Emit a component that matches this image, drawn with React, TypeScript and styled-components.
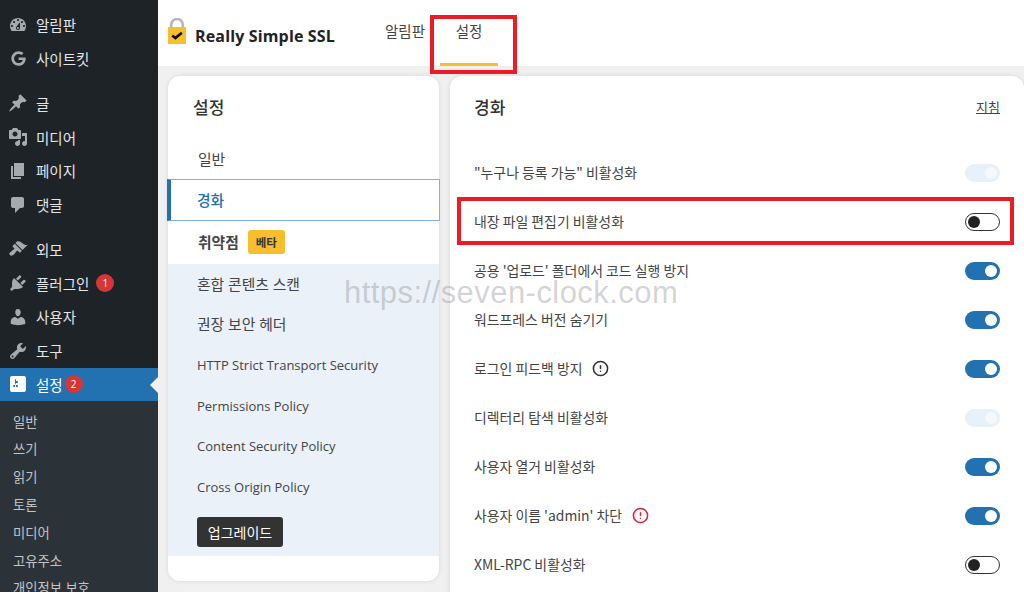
import React from "react"
import styled, { createGlobalStyle } from "styled-components"
import { FaGoogle } from "react-icons/fa"
import { CircleAlert } from "lucide-react"

const GlobalStyle = createGlobalStyle`
	html, body {
		margin: 0;
		height: 100%;
		overflow: hidden;
	}
	body {
		font-family: "Open Sans", "Noto Sans CJK KR", sans-serif;
		background: #f0f0f0;
	}
`

const AppWrap = styled.div`
	position: relative;
	display: flex;
	width: 1024px;
	height: 592px;
	overflow: hidden;
`

const Sidebar = styled.nav`
	flex: 0 0 158px;
	display: flex;
	flex-direction: column;
	background: #1d2327;
	padding-top: 8px;
	box-sizing: border-box;
	overflow: hidden;
`

const MenuGroup = styled.div`
	flex-shrink: 0;
	margin-bottom: 10.8px;
`

const MenuItem = styled.div<{ $active?: boolean }>`
	position: relative;
	flex-shrink: 0;
	display: flex;
	align-items: center;
	height: 33.8px;
	padding-left: 8px;
	gap: 8px;
	font-size: 14.5px;
	color: ${p => (p.$active ? "#fff" : "#e4e6e8")};
	background: ${p => (p.$active ? "#2271b1" : "transparent")};
	svg.menu-icon {
		flex: 0 0 20px;
		width: 20px;
		height: 20px;
		fill: ${p => (p.$active ? "#fff" : "#a7aaad")};
	}
`

const GoogleSlot = styled.span`
	flex: 0 0 20px;
	display: flex;
	justify-content: center;
	color: #a7aaad;
	font-size: 15px;
`

const Count = styled.span<{ $tight?: boolean }>`
	display: inline-flex;
	align-items: center;
	justify-content: center;
	width: 18px;
	height: 18px;
	border-radius: 50%;
	background: #d63638;
	color: #fff;
	font-size: 10px;
	margin-left: ${p => (p.$tight ? "-6px" : "-1px")};
`

const ActiveArrow = styled.span`
	position: absolute;
	right: 0;
	top: 9px;
	border: 8px solid transparent;
	border-left-width: 0;
	border-right-color: #f0f0f1;
`

const SubMenu = styled.div`
	flex: 1 0 auto;
	background: #2c3338;
	padding: 7.2px 0 0 13px;
`

const SubItem = styled.div`
	height: 27.8px;
	line-height: 27.8px;
	font-size: 13.3px;
	color: #c3c4c7;
`

const Main = styled.div`
	flex: 1;
	display: flex;
	flex-direction: column;
	min-width: 0;
`

const Header = styled.header`
	flex: 0 0 66px;
	display: flex;
	background: #fff;
	padding-left: 10px;
`

const Brand = styled.div`
	display: flex;
	align-items: flex-start;
	gap: 9px;
	box-sizing: border-box;
	width: 217px;
	padding-top: 18px;
`

const BrandName = styled.span`
	margin-top: 7px;
	font-size: 16px;
	line-height: 22px;
	font-weight: 700;
	color: #222;
	letter-spacing: 0.15px;
	white-space: nowrap;
`

const Tabs = styled.div`
	display: flex;
`

const Tab = styled.div<{ $active?: boolean }>`
	display: flex;
	justify-content: ${p => (p.$active ? "center" : "flex-start")};
	box-sizing: border-box;
	width: ${p => (p.$active ? "58px" : "55px")};
	padding-top: 20px;
	font-size: 14.5px;
	color: #444;
	border-bottom: 3px solid ${p => (p.$active ? "#f8be2e" : "transparent")};
`

const Content = styled.div`
	flex: 1;
	display: flex;
	gap: 11px;
	padding: 10px 0 0 10px;
	min-height: 0;
`

const Card = styled.section`
	background: #fff;
	border-radius: 12px;
	box-shadow: 0 0 5px rgba(0, 0, 0, 0.1);
`

const MenuCard = styled(Card)`
	flex: 0 0 271px;
	height: 505px;
`

const SettingsCard = styled(Card)`
	flex: 1;
	height: 560px;
	padding: 0 24px;
`

const CardTitle = styled.h2`
	margin: 0;
	font-size: 17px;
	font-weight: 500;
	color: #333;
	line-height: 20px;
`

const MenuTitle = styled(CardTitle)`
	padding: 22px 25px 0;
	height: 42px;
`

const NavItem = styled.div<{ $selected?: boolean; $bold?: boolean; $latin?: boolean }>`
	display: flex;
	align-items: center;
	gap: 9px;
	box-sizing: border-box;
	height: ${p => (p.$selected ? "42px" : p.$bold ? "43px" : "39px")};
	margin: ${p => (p.$selected ? "0 -1px" : "0")};
	padding-left: ${p => (p.$selected ? "26px" : "30px")};
	padding-bottom: ${p => (p.$latin ? "0" : "2px")};
	font-size: ${p => (p.$latin ? "13px" : "14.8px")};
	font-weight: ${p => (p.$bold ? 700 : 400)};
	color: ${p => (p.$selected ? "#2271b1" : "#444")};
	${p =>
		p.$selected &&
		`
		background: #fff;
		border: 1px solid #7db1e3;
		border-left: 4px solid #2271b1;
		font-weight: 500;
	`}
`

const Beta = styled.span`
	display: inline-flex;
	align-items: center;
	justify-content: center;
	width: 37px;
	height: 24px;
	border-radius: 3px;
	background: #f8be2e;
	color: #333;
	font-size: 11.5px;
	font-weight: 700;
`

const SubNav = styled.div`
	background: #eaf1f9;
	padding-bottom: 9px;
`

const SubNavItem = styled(NavItem)`
	height: 40.5px;
	padding-left: 29px;
`

const UpgradeButton = styled.div`
	display: flex;
	align-items: center;
	justify-content: center;
	width: 86px;
	height: 30px;
	margin: 10px 0 0 29px;
	border-radius: 3px;
	background: #333;
	color: #fff;
	font-size: 14px;
`

const CardHead = styled.div`
	display: flex;
	justify-content: space-between;
	align-items: flex-start;
	padding-top: 22px;
	height: 50px;
`

const GuideLink = styled.a`
	font-size: 13px;
	line-height: 18px;
	color: #444;
	text-decoration: underline;
`

const Rows = styled.div`
	padding-top: 0;
`

const Row = styled.div`
	display: flex;
	align-items: center;
	justify-content: space-between;
	height: 49px;
	font-family: "Noto Sans CJK KR", sans-serif;
	font-size: 13.9px;
	color: #444;
`

const RowLabel = styled.span`
	display: flex;
	align-items: center;
	gap: 10px;
	padding-bottom: 1px;
`

const WarnIcon = styled(CircleAlert)<{ $red?: boolean }>`
	color: ${p => (p.$red ? "#d7263d" : "#333")};
`

type ToggleState = "on" | "off" | "disabled"

const Toggle = styled.span<{ $state: ToggleState }>`
	position: relative;
	box-sizing: border-box;
	width: 35px;
	height: 18px;
	border-radius: 9px;
	background: ${p => (p.$state === "on" ? "#2271b1" : p.$state === "off" ? "#fff" : "#e8f0f8")};
	border: ${p => (p.$state === "off" ? "1px solid #333" : "none")};
	&::after {
		content: "";
		position: absolute;
		top: ${p => (p.$state === "off" ? "2px" : "3px")};
		left: ${p => (p.$state === "off" ? "2px" : "auto")};
		right: ${p => (p.$state === "off" ? "auto" : "3px")};
		width: 12px;
		height: 12px;
		border-radius: 50%;
		background: ${p => (p.$state === "on" ? "#fff" : p.$state === "off" ? "#222" : "#f6f9fc")};
	}
`

const RedBox = styled.div<{ $left: number; $top: number; $width: number; $height: number }>`
	position: absolute;
	box-sizing: border-box;
	left: ${p => p.$left}px;
	top: ${p => p.$top}px;
	width: ${p => p.$width}px;
	height: ${p => p.$height}px;
	border: 4px solid #ed1c24;
	pointer-events: none;
`

const Watermark = styled.div`
	position: absolute;
	left: 344px;
	top: 275px;
	font-family: "Liberation Sans", Arial, sans-serif;
	font-size: 31px;
	line-height: 36px;
	letter-spacing: 0.45px;
	color: rgba(120, 120, 120, 0.33);
	white-space: nowrap;
	pointer-events: none;
`

const icons: Record<string, string> = {
	dashboard:
		"M3.76 16h12.48c1.1-1.37 1.76-3.11 1.76-5 0-4.42-3.58-8-8-8s-8 3.58-8 8c0 1.89.66 3.63 1.76 5zM10 4c.55 0 1 .45 1 1s-.45 1-1 1-1-.45-1-1 .45-1 1-1zM6 6c.55 0 1 .45 1 1s-.45 1-1 1-1-.45-1-1 .45-1 1-1zm8 0c.55 0 1 .45 1 1s-.45 1-1 1-1-.45-1-1 .45-1 1-1zm-5.37 5.55L12 7v6c0 1.1-.9 2-2 2s-2-.9-2-2c0-.57.24-1.08.63-1.45zM4 10c.55 0 1 .45 1 1s-.45 1-1 1-1-.45-1-1 .45-1 1-1zm12 0c.55 0 1 .45 1 1s-.45 1-1 1-1-.45-1-1 .45-1 1-1zm-5 3c0-.55-.45-1-1-1s-1 .45-1 1 .45 1 1 1 1-.45 1-1z",
	post: "M10.44 3.02l1.82-1.82 6.36 6.35-1.83 1.82c-1.05-.68-2.48-.57-3.41.36l-.75.75c-.92.93-1.04 2.35-.35 3.41l-1.83 1.82-2.41-2.41-2.8 2.79c-.42.42-3.38 2.71-3.8 2.29s1.86-3.39 2.28-3.81l2.79-2.79L4.1 9.36l1.83-1.82c1.05.69 2.48.57 3.4-.36l.75-.75c.93-.92 1.05-2.35.36-3.41z",
	media:
		"M13 11V4c0-.55-.45-1-1-1h-1.67L9 1H5L3.67 3H2c-.55 0-1 .45-1 1v7c0 .55.45 1 1 1h10c.55 0 1-.45 1-1zM7 4.5c1.38 0 2.5 1.12 2.5 2.5S8.38 9.5 7 9.5 4.5 8.38 4.5 7 5.62 4.5 7 4.5zM14 6h5v10.5c0 1.38-1.12 2.5-2.5 2.5S14 17.88 14 16.5s1.12-2.5 2.5-2.5c.17 0 .34.02.5.05V9h-3V6zm-4 8.05V13h2v3.5c0 1.38-1.12 2.5-2.5 2.5S7 17.88 7 16.5 8.12 14 9.5 14c.17 0 .34.02.5.05z",
	page: "M6 15V2h10v13H6zm-1 1h8v2H3V5h2v11z",
	comments: "M5 2h9c1.1 0 2 .9 2 2v7c0 1.1-.9 2-2 2h-2l-5 5v-5H5c-1.1 0-2-.9-2-2V4c0-1.1.9-2 2-2z",
	appearance:
		"M14.48 11.06L7.41 3.99l1.5-1.5c.5-.56 2.3-.47 3.51.32 1.21.8 1.43 1.28 2.91 2.1 1.18.64 2.45 1.26 4.45.85zm-.71.71L6.7 4.7 4.93 6.47c-.39.39-.39 1.02 0 1.41l1.06 1.06c.39.39.39 1.03 0 1.42-.6.6-1.43 1.11-2.21 1.69-.35.26-.7.53-1.01.84C1.43 13.23.76 14.91 1.95 16.1c1.19 1.19 2.85.5 4.22-.81.31-.31.58-.66.84-1.01.58-.78 1.09-1.61 1.69-2.21.39-.39 1.02-.39 1.41 0l1.06 1.06c.39.39 1.02.39 1.41 0z",
	plugins:
		"M13.11 4.36L9.87 7.6 8 5.73l3.24-3.24c.35-.34 1.05-.2 1.56.32.52.51.66 1.21.31 1.55zm-8 1.77l.91-1.12 9.01 9.01-1.19.84c-.71.71-2.63 1.16-3.82 1.16H6.14L4.9 17.26c-.59.59-1.54.59-2.12 0-.59-.58-.59-1.53 0-2.12l1.24-1.24v-3.88c0-1.13.4-3.19 1.09-3.89zm7.26 3.97l3.24-3.24c.34-.35 1.04-.21 1.55.31.52.51.66 1.21.31 1.55l-3.24 3.25z",
	users:
		"M10 9.25c-2.27 0-2.73-3.44-2.73-3.44C7 4.02 7.82 2 9.97 2c2.16 0 2.98 2.02 2.71 3.81 0 0-.41 3.44-2.68 3.44zm0 2.57L12.72 10c2.39 0 4.52 2.33 4.52 4.53v2.49s-3.65 1.13-7.24 1.13c-3.65 0-7.24-1.13-7.24-1.13v-2.49c0-2.25 1.94-4.48 4.47-4.48z",
	tools:
		"M16.68 9.77c-1.34 1.34-3.3 1.67-4.95.99l-5.41 6.52c-.99.99-2.59.99-3.58 0s-.99-2.59 0-3.57l6.52-5.42c-.68-1.65-.35-3.61.99-4.95 1.28-1.28 3.12-1.62 4.72-1.06l-2.89 2.89 2.82 2.82 2.86-2.87c.53 1.58.18 3.39-1.08 4.67zM3.81 16.21c.4.39 1.04.39 1.43 0 .4-.4.4-1.04 0-1.43-.39-.4-1.03-.4-1.43 0-.39.39-.39 1.03 0 1.43z",
	settings:
		"M18 16V4c0-1.1-.9-2-2-2H4c-1.1 0-2 .9-2 2v12c0 1.1.9 2 2 2h12c1.1 0 2-.9 2-2zM8 11h1c.55 0 1 .45 1 1s-.45 1-1 1H8v1.5c0 .28-.22.5-.5.5s-.5-.22-.5-.5V13H6c-.55 0-1-.45-1-1s.45-1 1-1h1V5.5c0-.28.22-.5.5-.5s.5.22.5.5V7h1c.55 0 1 .45 1 1s-.45 1-1 1h-1v5.5c0 .28-.22.5-.5.5s-.5-.22-.5-.5V9z",
}

const MenuIcon = ({ name }: { name: string }) => (
	<svg className="menu-icon" viewBox="0 0 20 20" aria-hidden="true">
		<path d={icons[name]} />
	</svg>
)

const LockLogo = () => (
	<svg width="18" height="26" viewBox="0 0 18 26" aria-hidden="true">
		<path d="M3.2 10V6.8a5.8 5.8 0 0 1 11.6 0V10" fill="none" stroke="#b4b6b8" strokeWidth="2.6" />
		<rect x="0" y="9" width="18" height="17" fill="#f8be2e" />
		<path d="M4.2 17.5l3.2 2.6 6.4-5.4" fill="none" stroke="#111" strokeWidth="2.6" />
	</svg>
)

const subItems = ["일반", "쓰기", "읽기", "토론", "미디어", "고유주소", "개인정보 보호"]

const policyItems = [
	{ label: "혼합 콘텐츠 스캔" },
	{ label: "권장 보안 헤더" },
	{ label: "HTTP Strict Transport Security", latin: true },
	{ label: "Permissions Policy", latin: true },
	{ label: "Content Security Policy", latin: true },
	{ label: "Cross Origin Policy", latin: true },
]

const settingRows: { label: string; state: ToggleState; warn?: "gray" | "red" }[] = [
	{ label: '"누구나 등록 가능" 비활성화', state: "disabled" },
	{ label: "내장 파일 편집기 비활성화", state: "off" },
	{ label: "공용 '업로드' 폴더에서 코드 실행 방지", state: "on" },
	{ label: "워드프레스 버전 숨기기", state: "on" },
	{ label: "로그인 피드백 방지", state: "on", warn: "gray" },
	{ label: "디렉터리 탐색 비활성화", state: "disabled" },
	{ label: "사용자 열거 비활성화", state: "on" },
	{ label: "사용자 이름 'admin' 차단", state: "on", warn: "red" },
	{ label: "XML-RPC 비활성화", state: "off" },
]

export default function App() {
	return (
		<AppWrap>
			<GlobalStyle />
			<Sidebar>
				<MenuGroup>
					<MenuItem><MenuIcon name="dashboard" />알림판</MenuItem>
					<MenuItem><GoogleSlot><FaGoogle /></GoogleSlot>사이트킷</MenuItem>
				</MenuGroup>
				<MenuGroup>
					<MenuItem><MenuIcon name="post" />글</MenuItem>
					<MenuItem><MenuIcon name="media" />미디어</MenuItem>
					<MenuItem><MenuIcon name="page" />페이지</MenuItem>
					<MenuItem><MenuIcon name="comments" />댓글</MenuItem>
				</MenuGroup>
				<MenuItem><MenuIcon name="appearance" />외모</MenuItem>
				<MenuItem><MenuIcon name="plugins" />플러그인<Count>1</Count></MenuItem>
				<MenuItem><MenuIcon name="users" />사용자</MenuItem>
				<MenuItem><MenuIcon name="tools" />도구</MenuItem>
				<MenuItem $active>
					<MenuIcon name="settings" />설정<Count $tight>2</Count>
					<ActiveArrow />
				</MenuItem>
				<SubMenu>
					{subItems.map(item => <SubItem key={item}>{item}</SubItem>)}
				</SubMenu>
			</Sidebar>
			<Main>
				<Header>
					<Brand><LockLogo /><BrandName>Really Simple SSL</BrandName></Brand>
					<Tabs>
						<Tab>알림판</Tab>
						<Tab $active>설정</Tab>
					</Tabs>
				</Header>
				<Content>
					<MenuCard>
						<MenuTitle>설정</MenuTitle>
						<NavItem>일반</NavItem>
						<NavItem $selected>경화</NavItem>
						<NavItem $bold>취약점<Beta>베타</Beta></NavItem>
						<SubNav>
							{policyItems.map(item => (
								<SubNavItem key={item.label} $latin={item.latin}>{item.label}</SubNavItem>
							))}
							<UpgradeButton>업그레이드</UpgradeButton>
						</SubNav>
					</MenuCard>
					<SettingsCard>
						<CardHead>
							<CardTitle>경화</CardTitle>
							<GuideLink>지침</GuideLink>
						</CardHead>
						<Rows>
							{settingRows.map(row => (
								<Row key={row.label}>
									<RowLabel>
										{row.label}
										{row.warn && <WarnIcon size={17} strokeWidth={2.2} $red={row.warn === "red"} />}
									</RowLabel>
									<Toggle $state={row.state} />
								</Row>
							))}
						</Rows>
					</SettingsCard>
				</Content>
			</Main>
			<RedBox $left={430} $top={15} $width={87} $height={59} />
			<RedBox $left={457} $top={197} $width={557} $height={48} />
			<Watermark>https://seven-clock.com</Watermark>
		</AppWrap>
	)
}
